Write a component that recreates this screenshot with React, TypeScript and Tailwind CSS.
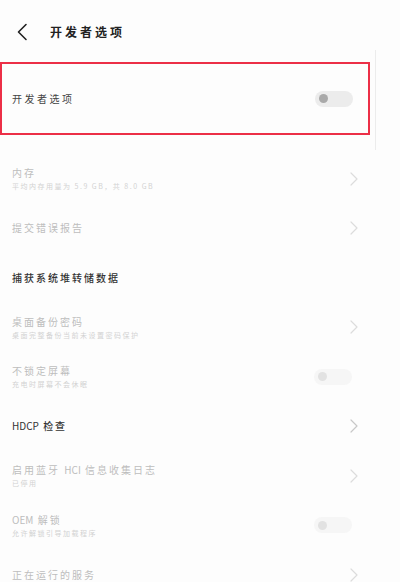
import React from "react";

const Chevron = ({ color = "#d4d4d4" }: { color?: string }) => (
  <svg width="8" height="14" viewBox="0 0 8 14" fill="none">
    <path d="M1 1l6 6-6 6" stroke={color} strokeWidth="1.2" strokeLinecap="round" strokeLinejoin="round" />
  </svg>
);

const Toggle = ({ faint = false }: { faint?: boolean }) => (
  <div className={`flex h-[16px] w-[38px] items-center rounded-full pl-[4px] ${faint ? "bg-[#f6f6f6]" : "bg-[#ececec]"}`}>
    <div className={`h-[9px] w-[9px] rounded-full ${faint ? "bg-[#e2e2e2]" : "bg-[#a9a9a9]"}`} />
  </div>
);

// latin words are set tighter and lighter than the CJK text around them
const Label = ({ text }: { text: string }) => (
  <>
    {text.split(/([A-Za-z]+)/).map((part, i) =>
      /^[A-Za-z]+$/.test(part) ? (
        <span key={i} className="font-normal tracking-[0px]">
          {part}
        </span>
      ) : (
        <span key={i}>{part}</span>
      )
    )}
  </>
);

type Row = {
  title: string;
  sub?: string;
  dark?: boolean;
  right?: "chevron" | "toggle" | "none";
};

const rows: Row[] = [
  { title: "内存", sub: "平均内存用量为 5.9 GB，共 8.0 GB", right: "chevron" },
  { title: "提交错误报告", right: "chevron" },
  { title: "捕获系统堆转储数据", dark: true, right: "none" },
  { title: "桌面备份密码", sub: "桌面完整备份当前未设置密码保护", right: "chevron" },
  { title: "不锁定屏幕", sub: "充电时屏幕不会休眠", right: "toggle" },
  { title: "HDCP 检查", dark: true, right: "chevron" },
  { title: "启用蓝牙 HCI 信息收集日志", sub: "已停用", right: "chevron" },
  { title: "OEM 解锁", sub: "允许解锁引导加载程序", right: "toggle" },
  { title: "正在运行的服务", right: "chevron" },
];

export default function App() {
  return (
    <div
      className="relative h-[582px] w-[400px] overflow-hidden bg-[#fdfdfd]"
      style={{ fontFamily: '"Noto Sans CJK SC", "Noto Sans", sans-serif' }}
    >
      {/* header */}
      <div className="flex h-[62px] items-center">
        <div className="ml-[16px] mt-[2px] flex w-[14px] items-center">
          <svg width="12" height="18" viewBox="0 0 12 18" fill="none">
            <path d="M10 1.5L2.5 9l7.5 7.5" stroke="#222" strokeWidth="1.6" strokeLinecap="round" strokeLinejoin="round" />
          </svg>
        </div>
        <div className="ml-[20px] mt-[2px] text-[12px] font-bold tracking-[3px] text-[#222]">开发者选项</div>
      </div>

      {/* highlighted row */}
      <div className="flex h-[73px] w-[370px] items-center justify-between border-2 border-[#ec2f47] pl-[10px] pr-[15px]">
        <span className="text-[10px] tracking-[2.5px] text-[#444]">开发者选项</span>
        <Toggle />
      </div>

      <div className="h-[19px]" />

      {rows.map((r) => (
        <div key={r.title} className="flex h-[49.5px] items-center justify-between pl-[12px] pr-[42px]">
          <div className="flex flex-col">
            <span
              className={`text-[10px] leading-[14px] tracking-[2px] ${r.dark ? "font-medium text-[#333]" : "text-[#bdbdbd]"}`}
            >
              <Label text={r.title} />
            </span>
            {r.sub && (
              <span className="mt-[1px] text-[7px] leading-[10px] tracking-[1.5px] text-[#d2d2d2]">{r.sub}</span>
            )}
          </div>
          {r.right === "chevron" && <Chevron color={r.dark ? "#c8c8c8" : "#dcdcdc"} />}
          {r.right === "toggle" && (
            <div className="mr-[6px]">
              <Toggle faint />
            </div>
          )}
        </div>
      ))}

      {/* scrollbar hint */}
      <div className="absolute left-[375px] top-[50px] h-[100px] w-[1px] bg-[#ececec]" />
    </div>
  );
}
